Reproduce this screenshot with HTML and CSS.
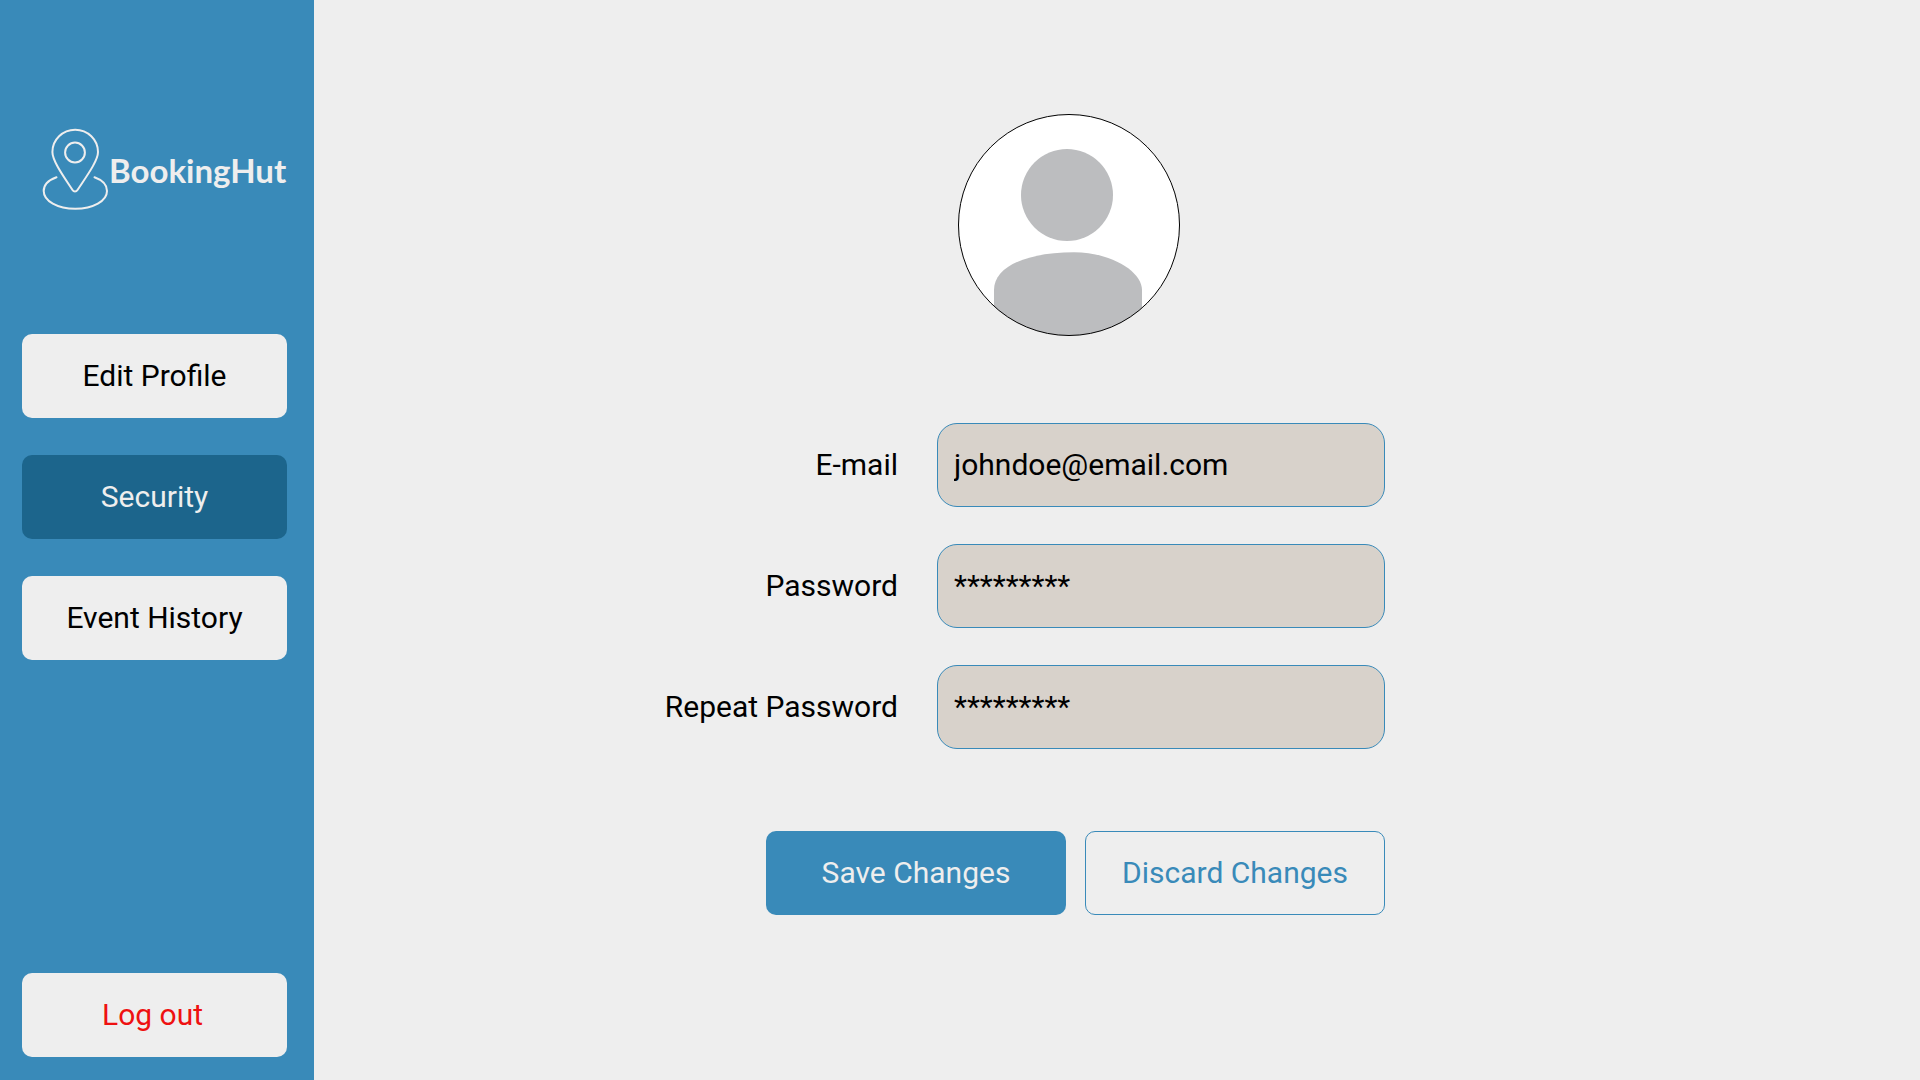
FILE: index.html
```html
<!DOCTYPE html>
<html lang="en">
<head>
  <meta charset="utf-8">
  <meta name="viewport" content="width=device-width, initial-scale=1">
  <title>BookingHut – Security</title>
  <link rel="stylesheet" href="styles.css">
</head>
<body>
  <div class="layout">
    <aside class="sidebar">
      <a class="logo" href="#">
        <svg class="logo-mark" viewBox="0 0 67 82" aria-hidden="true">
          <path d="M33 63.500Q31.500 63.500 30.500 62C22 49 10.400 33 10.400 24A22.800 22.300 0 0 1 56 24C56 33 44 49 35.500 62Q34.500 63.500 33 63.500Z"/>
          <circle cx="33" cy="24.500" r="9.900"/>
          <path d="M14.500 49.300C7 52 1.700 57 1.700 63C1.700 73 15.500 80.800 33.300 80.800S65 73 65 63C65 57 60 52 52.500 49.300"/>
        </svg>
        <span class="logo-name">BookingHut</span>
      </a>
      <nav class="menu">
        <button class="button button-light" type="button">Edit Profile</button>
        <button class="button button-current" type="button" aria-current="page">Security</button>
        <button class="button button-light" type="button">Event History</button>
      </nav>
      <button class="button button-light button-logout" type="button">Log out</button>
    </aside>
    <main class="content">
      <form class="profile">
        <div class="avatar-row">
          <svg class="avatar" viewBox="0 0 222 222" role="img" aria-label="Profile picture">
            <clipPath id="avatar-clip"><circle cx="111" cy="111" r="110.500"/></clipPath>
            <circle cx="111" cy="111" r="110.500" fill="#fff"/>
            <g clip-path="url(#avatar-clip)" fill="#bcbdbf">
              <circle cx="109" cy="81" r="46"/>
              <path d="M36 222V176C36 152 70 138.300 116 138.300C154 138.300 184 158 184 176V222Z"/>
            </g>
            <circle cx="111" cy="111" r="110.500" fill="none" stroke="#000"/>
          </svg>
        </div>
        <div class="fields">
          <label for="email">E-mail</label>
          <input id="email" type="text" value="johndoe@email.com">
          <label for="password">Password</label>
          <input id="password" type="text" value="*********">
          <label for="repeat">Repeat Password</label>
          <input id="repeat" type="text" value="*********">
        </div>
        <div class="actions">
          <button class="button button-primary" type="submit">Save Changes</button>
          <button class="button button-outline" type="reset">Discard Changes</button>
        </div>
      </form>
    </main>
  </div>
</body>
</html>
```
FILE: styles.css
```css
* {
  box-sizing: border-box;
}

body {
  margin: 0;
  background: #eee;
  color: #000;
  font: 30px/36px Roboto, sans-serif;
}

.layout {
  display: flex;
  min-height: 100vh;
}

.sidebar {
  display: flex;
  flex-direction: column;
  flex: none;
  width: 314px;
  padding: 128px 27px 23px 22px;
  background: #398ab9;
}

.logo {
  display: flex;
  align-items: center;
  margin-bottom: 124px;
  padding-left: 20px;
  color: #eee;
  text-decoration: none;
}

.logo-mark {
  flex: none;
  width: 67px;
  height: 82px;
  fill: none;
  stroke: #eee;
  stroke-width: 2;
  stroke-linecap: round;
}

.logo-name {
  padding-top: 2px;
  font: 700 33px/40px Lato, sans-serif;
}

.menu {
  display: flex;
  flex-direction: column;
  gap: 37px;
  margin-bottom: 37px;
}

.button {
  height: 84px;
  padding: 0;
  border: 0;
  border-radius: 10px;
  font: inherit;
  cursor: pointer;
}

.button-light {
  background: #eee;
  color: #000;
}

.button-current {
  background: #1c658c;
  color: #eee;
}

.button-logout {
  margin-top: auto;
  padding-right: 4px;
  color: #ee1111;
}

.content {
  display: flex;
  flex: 1;
  justify-content: center;
  padding: 114px 188px 60px 0;
}

.profile {
  width: 100%;
  max-width: 724px;
}

.avatar-row {
  display: flex;
  justify-content: center;
  margin-bottom: 87px;
  padding-left: 92px;
}

.avatar {
  width: 222px;
  height: 222px;
}

.fields {
  display: grid;
  grid-template-columns: 1fr 448px;
  align-items: center;
  gap: 37px 39px;
  margin-bottom: 82px;
}

.fields label {
  text-align: right;
}

.fields input {
  width: 100%;
  height: 84px;
  padding: 0 16px 2px;
  border: 1px solid #398ab9;
  border-radius: 20px;
  background: #d8d2cb;
  color: #000;
  font: inherit;
}

.actions {
  display: grid;
  grid-template-columns: 300px 300px;
  justify-content: end;
  gap: 19px;
}

.button-primary {
  background: #398ab9;
  color: #eee;
}

.button-outline {
  border: 1px solid #398ab9;
  background: #eee;
  color: #398ab9;
}
```
